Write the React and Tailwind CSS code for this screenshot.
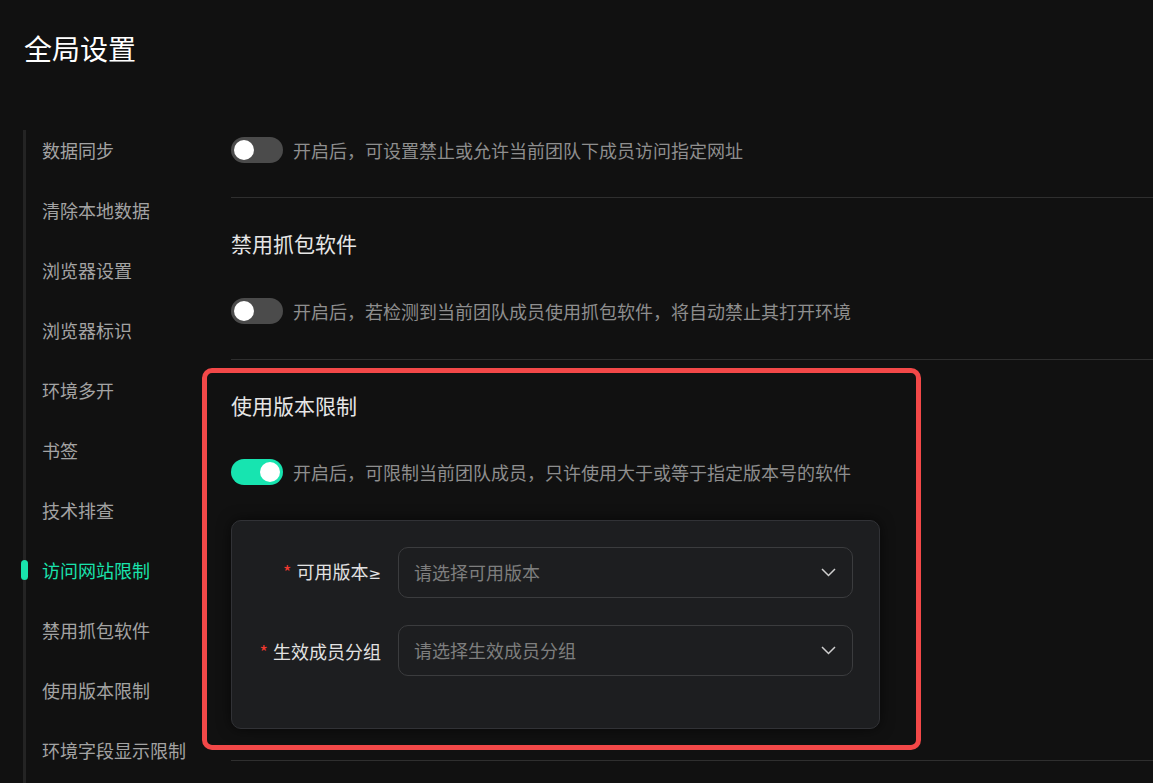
import React, { useState } from "react";

const menu = [
  "数据同步",
  "清除本地数据",
  "浏览器设置",
  "浏览器标识",
  "环境多开",
  "书签",
  "技术排查",
  "访问网站限制",
  "禁用抓包软件",
  "使用版本限制",
  "环境字段显示限制",
];

const Toggle = ({ on, onClick }) => (
  <button
    onClick={onClick}
    className={`relative w-[52px] h-[26px] shrink-0 rounded-full ${on ? "bg-[#17e4b0]" : "bg-[#4b4b4b]"}`}
  >
    <span
      className={`absolute top-[3px] w-5 h-5 rounded-full bg-white ${on ? "right-[3px]" : "left-[3px]"}`}
    />
  </button>
);

const ToggleRow = ({ on, onClick, text, className = "" }) => (
  <div className={`flex items-center h-[26px] ${className}`}>
    <Toggle on={on} onClick={onClick} />
    <span className="ml-[10px] text-[18px] leading-[26px] text-[#8e8e8e]">{text}</span>
  </div>
);

const Chevron = () => (
  <svg width="15" height="9" viewBox="0 0 15 9" fill="none">
    <path d="M1 1l6.5 6.5L14 1" stroke="#cfcfcf" strokeWidth="1.5" />
  </svg>
);

const SelectField = ({ label, suffix, placeholder }) => (
  <div className="flex items-center">
    <div className="w-[123px] shrink-0 text-right text-[18px] leading-[26px] text-[#e2e2e2] whitespace-nowrap">
      <span className="text-[#f2392f] mr-[5px]">*</span>
      {label}
      {suffix && <span className="font-['DejaVu_Sans',sans-serif] text-[15px]">{suffix}</span>}
    </div>
    <div className="ml-[17px] flex-1 h-[51px] flex items-center justify-between pl-[15px] pr-[16px] rounded-[10px] border border-[#3b3c3e] bg-[#1d1e20]">
      <span className="text-[18px] text-[#7e7e7e]">{placeholder}</span>
      <Chevron />
    </div>
  </div>
);

export default function App() {
  const [site, setSite] = useState(false);
  const [capture, setCapture] = useState(false);
  const [version, setVersion] = useState(true);
  const active = "访问网站限制";

  return (
    <div className="h-screen overflow-hidden bg-[#111111] font-['Noto_Sans_CJK_SC','Noto_Sans',sans-serif]">
      <div className="h-[130px] pl-6 pt-[28px]">
        <h1 className="text-[28px] leading-[40px] text-white">全局设置</h1>
      </div>

      <div className="flex">
        <div className="w-[231px] shrink-0 pl-[23px]">
          <div className="border-l-[3px] border-[#242424] flex flex-col gap-5 pb-10">
            {menu.map((m) => (
              <div
                key={m}
                className={`relative h-10 flex items-center pl-4 text-[18px] whitespace-nowrap ${m === active ? "text-[#19e3ad]" : "text-[#a3a3a3]"}`}
              >
                {m === active && (
                  <span className="absolute left-[-5px] top-[10px] w-[7px] h-5 rounded-full bg-[#19e3ad]" />
                )}
                {m}
              </div>
            ))}
          </div>
        </div>

        <div className="flex-1 min-w-0">
          <div className="pt-[7px] pb-[34px] border-b border-[#2f2f2f]">
            <ToggleRow
              on={site}
              onClick={() => setSite(!site)}
              text="开启后，可设置禁止或允许当前团队下成员访问指定网址"
            />
          </div>

          <div className="pt-[32px] pb-[35px] border-b border-[#2f2f2f]">
            <h2 className="text-[21px] leading-[26px] text-[#e6e6e6]">禁用抓包软件</h2>
            <ToggleRow
              className="mt-[42px]"
              on={capture}
              onClick={() => setCapture(!capture)}
              text="开启后，若检测到当前团队成员使用抓包软件，将自动禁止其打开环境"
            />
          </div>

          <div className="relative pt-[32px] pb-[31px] border-b border-[#2f2f2f]">
            <h2 className="text-[21px] leading-[26px] text-[#e6e6e6]">使用版本限制</h2>
            <ToggleRow
              className="mt-[41px]"
              on={version}
              onClick={() => setVersion(!version)}
              text="开启后，可限制当前团队成员，只许使用大于或等于指定版本号的软件"
            />
            <div className="mt-[35px] w-[649px] rounded-[10px] border border-[#313236] bg-[#1d1e20] shadow-[0_0_14px_rgba(0,0,0,0.6)] px-[26px] pt-[26px] pb-[52px] flex flex-col gap-[27px]">
              <SelectField label="可用版本" suffix="≥" placeholder="请选择可用版本" />
              <SelectField label="生效成员分组" placeholder="请选择生效成员分组" />
            </div>
            <div className="pointer-events-none absolute top-[8px] left-[-29px] w-[719px] h-[382px] rounded-[10px] border-[5px] border-[#f24848]" />
          </div>
        </div>
      </div>
    </div>
  );
}
